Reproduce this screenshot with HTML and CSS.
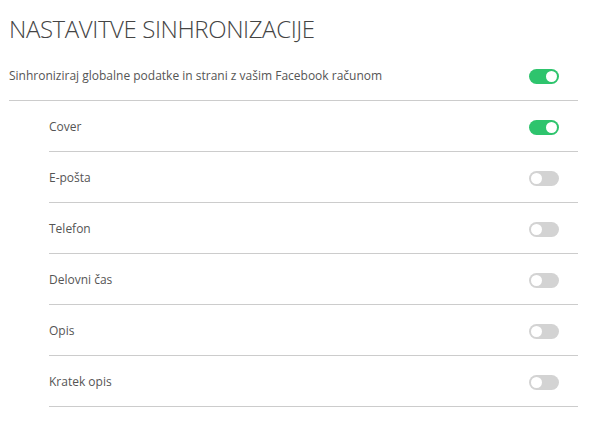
FILE: index.html
```html
<!DOCTYPE html>
<html lang="sl">
<head>
    <meta charset="UTF-8">
    <meta name="viewport" content="width=device-width, initial-scale=1.0">
    <title>Nastavitve sinhronizacije</title>
    <link rel="stylesheet" href="styles.css">
</head>
<body>
    <div class="settings">
        <h2>NASTAVITVE SINHRONIZACIJE</h2>

        <div class="row main">
            <span>Sinhroniziraj globalne podatke in strani z vašim Facebook računom</span>
            <span class="toggle on"></span>
        </div>

        <div class="sub">
            <div class="row">
                <span>Cover</span>
                <span class="toggle on"></span>
            </div>
            <div class="row">
                <span>E-pošta</span>
                <span class="toggle"></span>
            </div>
            <div class="row">
                <span>Telefon</span>
                <span class="toggle"></span>
            </div>
            <div class="row">
                <span>Delovni čas</span>
                <span class="toggle"></span>
            </div>
            <div class="row">
                <span>Opis</span>
                <span class="toggle"></span>
            </div>
            <div class="row">
                <span>Kratek opis</span>
                <span class="toggle"></span>
            </div>
        </div>
    </div>
</body>
</html>
```

FILE: styles.css
```css
body {
    margin: 0;
    font-family: "Open Sans", "Noto Sans", sans-serif;
    background-color: #fff;
    color: #555;
}
.settings {
    width: 569px;
    padding: 14px 0 0 9px;
}
h2 {
    margin: 0;
    font-size: 24px;
    font-weight: 300;
    line-height: 30px;
    color: #444;
    letter-spacing: -0.4px;
}
.row {
    display: flex;
    align-items: center;
    justify-content: space-between;
    height: 50px;
    padding-right: 19px;
    border-bottom: 1px solid #ccc;
    font-size: 12px;
}
.row.main {
    margin-top: 6px;
}
.sub {
    padding-left: 40px;
}
.toggle {
    position: relative;
    top: 1px;
    width: 30px;
    height: 15px;
    border-radius: 8px;
    background-color: #d3d3d3;
}
.toggle::after {
    content: "";
    position: absolute;
    top: 2px;
    left: 2px;
    width: 11px;
    height: 11px;
    border-radius: 50%;
    background-color: #fff;
}
.toggle.on {
    background-color: #2ec46d;
}
.toggle.on::after {
    left: 17px;
}
```
